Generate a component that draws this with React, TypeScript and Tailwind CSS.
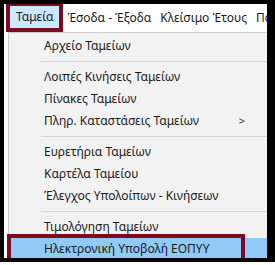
import React from 'react';

type Row = { label: string; sep?: boolean; arrow?: boolean; active?: boolean };

const rows: Row[] = [
  { label: 'Αρχείο Ταμείων' },
  { label: '', sep: true },
  { label: 'Λοιπές Κινήσεις Ταμείων' },
  { label: 'Πίνακες Ταμείων' },
  { label: 'Πληρ. Καταστάσεις Ταμείων', arrow: true },
  { label: '', sep: true },
  { label: 'Ευρετήρια Ταμείων' },
  { label: 'Καρτέλα Ταμείου' },
  { label: 'Έλεγχος Υπολοίπων - Κινήσεων' },
  { label: '', sep: true },
  { label: 'Τιμολόγηση Ταμείων' },
  { label: 'Ηλεκτρονική Υποβολή ΕΟΠΥΥ', active: true },
];

export default function App() {
  return (
    <div className="w-[275px] h-[265px] bg-white overflow-hidden" style={{ fontFamily: '"Noto Sans", "Open Sans", sans-serif' }}>
      <div className="h-[262px] border-l-[4px] border-t-[4px] border-r-[8px] border-b-[4px] border-black bg-white flex flex-col overflow-hidden">
        {/* menu bar */}
        <div className="h-[28px] shrink-0 flex items-center text-[12px] text-[#1a1a1a] bg-white whitespace-nowrap overflow-hidden">
          <div className="shrink-0 ml-[2px] h-[30px] -mt-[2px] border-[4px] border-[#7b0b20] bg-[#cce8ff] flex items-center px-[6px]">
            Ταμεία
          </div>
          <span className="shrink-0 ml-[4px]">Έσοδα - Έξοδα</span>
          <span className="shrink-0 ml-[9px]">Κλείσιμο Έτους</span>
          <span className="shrink-0 ml-[9px]">Πα</span>
        </div>

        {/* dropdown */}
        <div className="ml-[4px] flex-1 bg-[#f2f2f2] border-l border-t border-[#cccccc] pt-[2px] text-[12px] text-[#1a1a1a]">
          {rows.map((r, i) =>
            r.sep ? (
              <div key={i} className="h-[9px] flex items-center pl-[32px]">
                <div className="h-px w-full bg-[#d7d7d7]" />
              </div>
            ) : r.active ? (
              <div key={i} className="relative h-[22px] bg-[#91c9f7] flex items-center pl-[35px]">
                <div className="absolute left-[-2px] top-[-4px] w-[238px] h-[28px] border-[4px] border-[#7b0b20]" />
                <span className="relative whitespace-nowrap">{r.label}</span>
              </div>
            ) : (
              <div key={i} className="w-full h-[22px] flex items-center pl-[35px] pr-[22px]">
                <span className="whitespace-nowrap">{r.label}</span>
                {r.arrow && <span className="ml-auto text-[11px] text-[#333]">&gt;</span>}
              </div>
            )
          )}
        </div>
      </div>
    </div>
  );
}
